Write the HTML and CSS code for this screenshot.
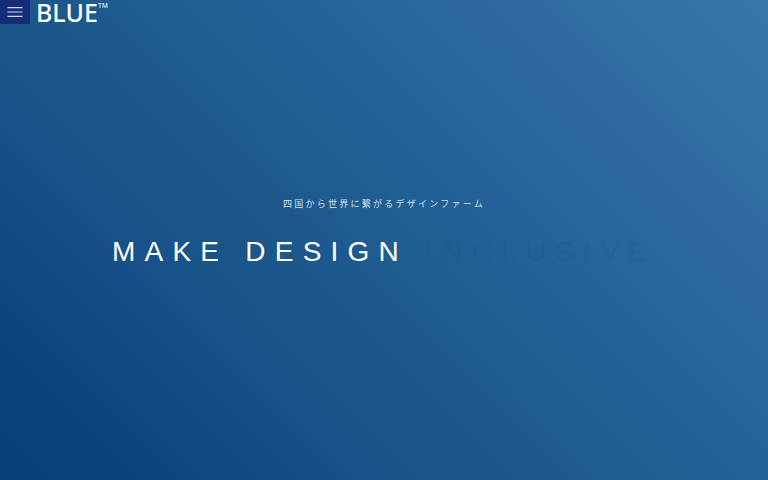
FILE: index.html
```html
<!DOCTYPE html>
<html lang="ja">
<head>
<meta charset="utf-8">
<meta name="viewport" content="width=device-width, initial-scale=1">
<title>BLUE</title>
<link rel="stylesheet" href="styles.css">
</head>
<body>
<header class="site-header">
  <button class="menu-button" type="button" aria-label="Menu">
    <svg class="menu-icon" viewBox="0 0 16 10" aria-hidden="true">
      <path d="M.5 .6h15M.5 5h15M.5 9.4h15"/>
    </svg>
  </button>
  <a class="logo" href="#">BLUE<span class="logo-mark">TM</span></a>
</header>
<main class="hero">
  <p class="tagline">四国から世界に繋がるデザインファーム</p>
  <h1 class="headline">MAKE DESIGN <span class="headline-fading">INCLUSIVE</span></h1>
</main>
</body>
</html>
```
FILE: styles.css
```css
* {
  box-sizing: border-box;
}

body {
  display: flex;
  flex-direction: column;
  min-height: 100vh;
  margin: 0;
  background: linear-gradient(45deg, #07407a 0%, #0b447e 12%, #124b84 20%, #185288 30%, #1c588c 42%, #246196 60%, #2f6ba0 80%, #3977aa 100%);
  color: #fff;
  font-family: "Liberation Sans", "Noto Sans CJK JP", sans-serif;
}

.site-header {
  display: flex;
  align-items: flex-start;
  gap: 6px;
}

.menu-button {
  display: flex;
  align-items: center;
  justify-content: center;
  width: 30px;
  height: 24px;
  padding: 0;
  border: 0;
  background: #142e7b;
}

.menu-icon {
  width: 16px;
  height: 10px;
  fill: none;
  stroke: #d3d8e8;
  stroke-width: 1.2;
}

.logo {
  display: flex;
  color: #fff;
  font: 500 25px/24px "Noto Sans", sans-serif;
  text-decoration: none;
}

.logo-mark {
  font: 7px/12px "Liberation Sans", sans-serif;
}

.hero {
  display: flex;
  flex: 1;
  flex-direction: column;
  align-items: center;
  justify-content: center;
  gap: 20px;
  padding-bottom: 36px;
}

.tagline {
  margin: 0;
  color: #d5e1ed;
  font-family: "Noto Sans CJK JP", sans-serif;
  font-size: 9px;
  line-height: 16px;
  letter-spacing: 0.25em;
}

.headline {
  margin: 0;
  font-size: 28px;
  font-weight: 400;
  line-height: 40px;
  letter-spacing: 0.33em;
}

.headline-fading {
  color: rgba(20, 85, 145, 0.2);
}
```
